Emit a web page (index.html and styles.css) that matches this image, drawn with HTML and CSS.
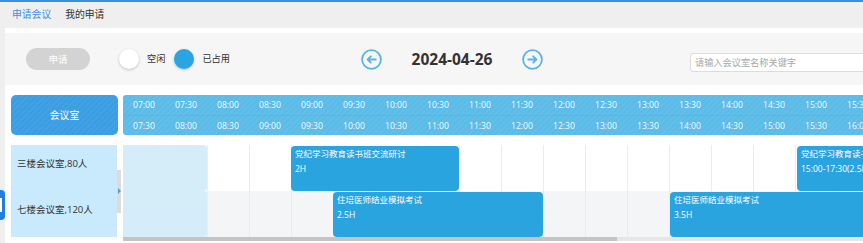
FILE: index.html
```html
<!DOCTYPE html>
<html lang="zh-CN">
<head>
<meta charset="utf-8">
<title>申请会议</title>
<link rel="stylesheet" href="styles.css">
</head>
<body>
<div class="topline"></div>
<nav class="tabs"><span class="tab active">申请会议</span><span class="tab">我的申请</span></nav>
<div class="float-btn"><span></span></div>
<main class="panel">
  <div class="toolbar">
    <button class="apply">申请</button>
    <div class="legend">
      <span class="dot free"></span><span class="lbl">空闲</span>
      <span class="dot busy"></span><span class="lbl">已占用</span>
    </div>
    <div class="datenav">
      <svg class="arrow" width="21" height="21" viewBox="0 0 21 21"><circle cx="10.5" cy="10.5" r="9.4" fill="none" stroke="#5cb3de" stroke-width="1.8"/><path d="M14.8 10.5H6.6M9.8 7.3L6.6 10.5L9.8 13.7" fill="none" stroke="#5cb3de" stroke-width="1.8" stroke-linecap="round" stroke-linejoin="round"/></svg>
      <span class="date">2024-04-26</span>
      <svg class="arrow" width="21" height="21" viewBox="0 0 21 21"><circle cx="10.5" cy="10.5" r="9.4" fill="none" stroke="#5cb3de" stroke-width="1.8"/><path d="M6.2 10.5H14.4M11.2 7.3L14.4 10.5L11.2 13.7" fill="none" stroke="#5cb3de" stroke-width="1.8" stroke-linecap="round" stroke-linejoin="round"/></svg>
    </div>
    <input class="search" type="text" placeholder="请输入会议室名称关键字">
  </div>

  <div class="schedule">
    <div class="rooms">
      <div class="room-head">会议室</div>
      <div class="room">三楼会议室,80人</div>
      <div class="room">七楼会议室,120人</div>
    </div>
    <div class="splitter"><span class="handle"></span></div>
    <div class="timeline">
      <div class="time-head">
        <div class="trow">
          <span>07:00</span><span>07:30</span><span>08:00</span><span>08:30</span><span>09:00</span><span>09:30</span><span>10:00</span><span>10:30</span><span>11:00</span><span>11:30</span><span>12:00</span><span>12:30</span><span>13:00</span><span>13:30</span><span>14:00</span><span>14:30</span><span>15:00</span><span>15:30</span><span>16:00</span><span>16:30</span>
        </div>
        <div class="trow second">
          <span>07:30</span><span>08:00</span><span>08:30</span><span>09:00</span><span>09:30</span><span>10:00</span><span>10:30</span><span>11:00</span><span>11:30</span><span>12:00</span><span>12:30</span><span>13:00</span><span>13:30</span><span>14:00</span><span>14:30</span><span>15:00</span><span>15:30</span><span>16:00</span><span>16:30</span><span>17:00</span>
        </div>
      </div>
      <div class="grid">
        <div class="grow">
          <span class="cell"></span><span class="cell"></span><span class="cell"></span><span class="cell"></span><span class="cell"></span><span class="cell"></span><span class="cell"></span><span class="cell"></span><span class="cell"></span><span class="cell"></span><span class="cell"></span><span class="cell"></span><span class="cell"></span><span class="cell"></span><span class="cell"></span><span class="cell"></span><span class="cell"></span><span class="cell"></span><span class="cell"></span><span class="cell"></span>
          <div class="past" style="left:0;width:84px"></div>
          <div class="event" style="left:168px;width:168px"><div class="ev-title">党纪学习教育读书班交流研讨</div><div class="ev-time">2H</div></div>
          <div class="event" style="left:674px;width:210px"><div class="ev-title">党纪学习教育读书班交流研讨</div><div class="ev-time">15:00-17:30(2.5H)</div></div>
        </div>
        <div class="grow alt">
          <span class="cell"></span><span class="cell"></span><span class="cell"></span><span class="cell"></span><span class="cell"></span><span class="cell"></span><span class="cell"></span><span class="cell"></span><span class="cell"></span><span class="cell"></span><span class="cell"></span><span class="cell"></span><span class="cell"></span><span class="cell"></span><span class="cell"></span><span class="cell"></span><span class="cell"></span><span class="cell"></span><span class="cell"></span><span class="cell"></span>
          <div class="past" style="left:0;width:84px"></div>
          <div class="event" style="left:210px;width:210px"><div class="ev-title">住培医师结业模拟考试</div><div class="ev-time">2.5H</div></div>
          <div class="event" style="left:547px;width:294px"><div class="ev-title">住培医师结业模拟考试</div><div class="ev-time">3.5H</div></div>
        </div>
      </div>
      <div class="hscroll"><div class="thumb"></div></div>
    </div>
  </div>
</main>
</body>
</html>
```

FILE: styles.css
```css
* { box-sizing: border-box; }
html, body { margin: 0; height: 100%; overflow: hidden; }
body {
  background: #efefef;
  font-family: "Open Sans", "Noto Sans CJK SC", sans-serif;
  font-size: 9.5px;
  color: #333;
  position: relative;
}
.topline { height: 2px; background: #3d8fe0; }
.tabs {
  height: 26px;
  display: flex;
  align-items: center;
  padding-left: 12px;
  gap: 14px;
  font-size: 9.8px;
  line-height: 14px;
}
.tab { color: #333; }
.tab.active { color: #3a8ee6; }

.float-btn {
  position: absolute;
  left: -12px;
  top: 190px;
  width: 17px;
  height: 30px;
  background: #1f7fe6;
  border-radius: 4px;
  z-index: 5;
}
.float-btn span {
  position: absolute;
  left: 12px;
  top: 8px;
  width: 2px;
  height: 14px;
  background: #fff;
}

.panel {
  margin-left: 5px;
  background: #fff;
  padding-top: 5px;
  height: calc(100% - 28px);
  width: 858px;
}
.toolbar {
  height: 52px;
  background: #f6f6f6;
  display: flex;
  align-items: center;
  width: 900px;
}
.apply {
  flex-shrink: 0;
  margin-left: 21px;
  width: 64px;
  height: 22px;
  border: 0;
  border-radius: 11px;
  background: #d3d3d3;
  color: #fff;
  font-family: "Noto Sans CJK SC", sans-serif;
  font-size: 9.6px;
  padding: 0;
}
.legend {
  flex-shrink: 0;
  margin-left: 29px;
  width: 242px;
  display: flex;
  align-items: center;
}
.dot {
  width: 20px;
  height: 20px;
  border-radius: 50%;
  box-shadow: 0 1px 3px rgba(0,0,0,0.22);
}
.dot.free { background: #fff; }
.dot.busy { background: #2aa5e1; margin-left: 9px; }
.lbl { margin-left: 8px; font-size: 9.2px; line-height: 14px; color: #333; }
.datenav {
  flex-shrink: 0;
  width: 182px;
  display: flex;
  align-items: center;
}
.arrow { display: block; flex-shrink: 0; }
.date {
  width: 140px;
  text-align: center;
  font-family: "Open Sans", sans-serif;
  font-weight: 700;
  font-size: 15.5px;
  line-height: 20px;
  color: #333;
}
.search {
  flex-shrink: 0;
  margin-left: 147px;
  width: 190px;
  height: 19px;
  margin-top: 6px;
  border: 1px solid #dcdcdc;
  border-radius: 3px;
  background: #fff;
  padding: 0 4px;
  font-family: "Noto Sans CJK SC", sans-serif;
  font-size: 9.2px;
  color: #333;
  outline: none;
}
.search::placeholder { color: #a9a9a9; }

.schedule {
  display: flex;
  margin-top: 10px;
  padding-left: 6px;
}
.rooms { width: 106px; flex-shrink: 0; }
.room-head {
  width: 107px;
  height: 40px;
  border-radius: 5px;
  background-color: #3b9ee2;
  background-image: repeating-linear-gradient(135deg, rgba(255,255,255,0.045) 0 1.5px, transparent 1.5px 4px);
  color: #fff;
  display: flex;
  align-items: center;
  justify-content: center;
  font-family: "Noto Sans CJK SC", sans-serif;
  font-size: 9.8px;
  margin-bottom: 10px;
}
.room {
  height: 46px;
  background: #c8eafc;
  padding: 12px 0 0 6px;
  line-height: 14px;
  font-size: 9.5px;
  color: #333;
}
.room:first-of-type { border-bottom: 1px solid #fff; }

.splitter {
  width: 6px;
  flex-shrink: 0;
  padding-top: 75px;
}
.handle {
  display: block;
  position: relative;
  width: 4px;
  height: 43px;
  background: #dcdcdc;
}
.handle::after {
  content: "";
  position: absolute;
  left: 1px;
  top: 18px;
  border-left: 3px solid #5b9bd5;
  border-top: 3px solid transparent;
  border-bottom: 3px solid transparent;
}

.timeline {
  width: 740px;
  flex-shrink: 0;
  overflow: hidden;
}
.time-head {
  width: 840px;
  height: 40px;
  border-radius: 3px 0 0 3px;
  background-color: #5bbce8;
  background-image: repeating-linear-gradient(135deg, rgba(255,255,255,0.05) 0 1.5px, transparent 1.5px 4px);
  margin-bottom: 10px;
}
.trow {
  display: flex;
  height: 20px;
  align-items: center;
}
.trow.second { border-top: 1px solid rgba(40,120,170,0.07); }
.trow span {
  width: 42px;
  flex-shrink: 0;
  text-align: center;
  font-family: "Open Sans", sans-serif;
  font-size: 8.6px;
  color: rgba(255,255,255,0.95);
}
.grid { width: 840px; }
.grow {
  position: relative;
  display: flex;
  height: 46px;
  background: #fff;
}
.grow.alt { background: #f4f5f7; }
.cell {
  width: 42px;
  flex-shrink: 0;
  border-left: 1px solid #ececec;
}
.past {
  position: absolute;
  top: 0;
  bottom: 0;
  background: #d5ecf9;
  border-radius: 0 4px 4px 0;
}
.event {
  position: absolute;
  top: 1px;
  bottom: 0;
  background: #29a4df;
  border-radius: 4px;
  color: #fff;
  padding: 1px 4px 0;
  font-size: 8.5px;
  line-height: 14.5px;
  white-space: nowrap;
  overflow: hidden;
}
.hscroll {
  height: 4px;
  background: #e6e6e6;
}
.thumb {
  width: 494px;
  height: 4px;
  background: #c4c4c4;
}
```
